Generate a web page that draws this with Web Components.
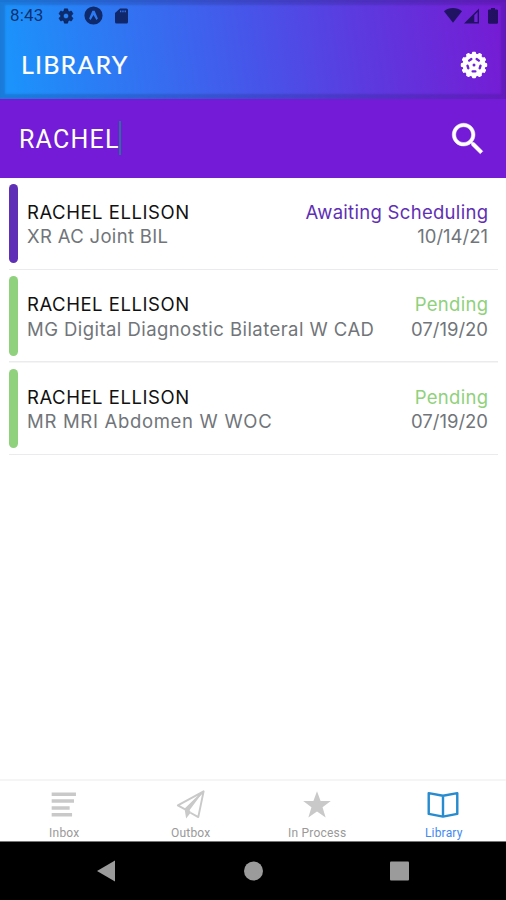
<!DOCTYPE html>
<html lang="en">
<head>
<meta charset="utf-8">
<title>Library</title>
<style>
  html, body { margin: 0; height: 100%; background: #fff; }
  body { overflow: hidden; font-family: Inter, "Liberation Sans", sans-serif; }
</style>
</head>
<body>
<library-app>
  <app-header slot="top" heading="LIBRARY" time="8:43"></app-header>
  <search-bar slot="top" value="RACHEL"></search-bar>

  <order-row state="awaiting" date="10/14/21">
    RACHEL ELLISON
    <span slot="exam" style="letter-spacing: .33px">XR AC Joint BIL</span>
    <span slot="status">Awaiting Scheduling</span>
  </order-row>
  <order-row state="pending" date="07/19/20">
    RACHEL ELLISON
    <span slot="exam" style="letter-spacing: .44px">MG Digital Diagnostic Bilateral W CAD</span>
    <span slot="status">Pending</span>
  </order-row>
  <order-row state="pending" date="07/19/20">
    RACHEL ELLISON
    <span slot="exam" style="letter-spacing: .69px">MR MRI Abdomen W WOC</span>
    <span slot="status">Pending</span>
  </order-row>

  <tab-bar slot="bottom">
    <tab-item icon="inbox">Inbox</tab-item>
    <tab-item icon="outbox">Outbox</tab-item>
    <tab-item icon="process">In Process</tab-item>
    <tab-item icon="library" active>Library</tab-item>
  </tab-bar>
  <system-nav slot="bottom"></system-nav>
</library-app>

<script>
const COG = 'M19.14 12.94c.04-.3.06-.61.06-.94 0-.32-.02-.64-.07-.94l2.03-1.58c.18-.14.23-.41.12-.61l-1.92-3.32c-.12-.22-.37-.29-.59-.22l-2.39.96c-.5-.38-1.03-.7-1.62-.94l-.36-2.54c-.04-.24-.24-.41-.48-.41h-3.84c-.24 0-.43.17-.47.41l-.36 2.54c-.59.24-1.13.57-1.62.94l-2.39-.96c-.22-.08-.47 0-.59.22L2.74 8.87c-.12.21-.08.47.12.61l2.03 1.58c-.05.3-.09.63-.09.94s.02.64.07.94l-2.03 1.58c-.18.14-.23.41-.12.61l1.92 3.32c.12.22.37.29.59.22l2.39-.96c.5.38 1.03.7 1.62.94l.36 2.54c.05.24.24.41.48.41h3.84c.24 0 .44-.17.47-.41l.36-2.54c.59-.24 1.13-.56 1.62-.94l2.39.96c.22.08.47 0 .59-.22l1.92-3.32c.12-.22.07-.47-.12-.61l-2.01-1.58zM12 15.6c-1.98 0-3.6-1.62-3.6-3.6s1.62-3.6 3.6-3.6 3.6 1.62 3.6 3.6-1.62 3.6-3.6 3.6z';

class LibraryApp extends HTMLElement {
  constructor() {
    super();
    this.attachShadow({ mode: 'open' });
    this.shadowRoot.innerHTML = `
      <style>
        :host { display: flex; flex-direction: column; height: 900px; }
        main { flex: 1; min-height: 0; padding: 0 8px 0 9px; }
      </style>
      <slot name="top"></slot>
      <main><slot></slot></main>
      <slot name="bottom"></slot>
    `;
  }
}

class AppHeader extends HTMLElement {
  constructor() {
    super();
    this.attachShadow({ mode: 'open' });

    // teeth and holes of the settings wheel
    let teeth = '';
    let holes = '';
    for (let i = 0; i < 12; i++) {
      teeth += `<rect x="-2" y="-13.2" width="4" height="4" rx="1" transform="rotate(${i * 30})"/>`;
    }
    for (let i = 0; i < 5; i++) {
      holes += `<rect x="-2.5" y="5.2" width="5" height="2.4" rx="1.1" transform="rotate(${i * 72})"/>`;
    }

    this.shadowRoot.innerHTML = `
      <style>
        :host {
          display: flex;
          flex-direction: column;
          box-sizing: border-box;
          flex: none;
          height: 98.5px;
          background: linear-gradient(82deg, #1c92fb 3%, #4557ea 48%, #5b3be0 70%, #751cd5 98%);
          box-shadow: inset 0 2px 1px rgba(20,20,80,.06), inset 0 0 2px 5px rgba(20,20,80,.18);
        }
        .status {
          display: flex;
          align-items: center;
          height: 31px;
          padding: 0 8px 0 10px;
          color: rgba(5,14,60,.74);
        }
        .time { width: 47px; font: 17px/31px Roboto, sans-serif; letter-spacing: .2px; }
        .status svg { flex: none; fill: currentColor; }
        .fill { flex: 1; }
        .title {
          display: flex;
          align-items: center;
          justify-content: space-between;
          height: 67px;
          padding: 0 18px 0 21px;
          color: #fff;
        }
        h1 { margin: 0; font: 400 25px/67px Lato, sans-serif; letter-spacing: 1.2px; -webkit-text-stroke: .2px #fff; }
      </style>
      <div class="status">
        <span class="time">${this.getAttribute('time')}</span>
        <svg width="18" height="18" viewBox="0 0 24 24"><path d="${COG}" stroke="currentColor" stroke-width=".8"/></svg>
        <svg width="19" height="19" viewBox="0 0 19 19" style="margin-left:9px">
          <path fill-rule="evenodd" d="M9.500 .4a9.100 9.100 0 1 0 0 18.200a9.100 9.100 0 0 0 0-18.200zM8.400 4.800h2.200l3.300 7.600-1.500 1.600-2.900-5-2.900 5-1.500-1.600z"/>
        </svg>
        <svg width="13" height="16" viewBox="0 0 13 16" style="margin-left:12px">
          <path fill-rule="evenodd" d="M5 .5h6.500A1.500 1.500 0 0 1 13 2v12a1.500 1.500 0 0 1-1.500 1.500h-10A1.500 1.500 0 0 1 0 14V5zM5 2.500v1.800h1.300V2.500zM7.300 2.500v1.800h1.300V2.500zM9.600 2.500v1.800h1.300V2.500z"/>
        </svg>
        <span class="fill"></span>
        <svg width="18" height="15" viewBox="0 0 18 15"><path d="M0 3.300C5-1 13-1 18 3.300L9 14.800z"/></svg>
        <svg width="16" height="16" viewBox="0 0 16 16" style="margin-left:2px">
          <path fill-rule="evenodd" d="M0 15.500L15 .5v15zM10.300 7.200v6.900h3.300V3.900z"/>
        </svg>
        <svg width="10" height="16" viewBox="0 0 10 16" style="margin:0 0 0 8px"><path d="M3 0h4v1.500h2.200l.8.800V15l-.8.800H.8L0 15V2.300l.8-.8H3z"/></svg>
      </div>
      <div class="title">
        <h1>${this.getAttribute('heading')}</h1>
        <svg width="28" height="28" viewBox="-14 -14 28 28" fill="#fff">
          <circle r="11.5"/>${teeth}
          <g fill="#7022d8">${holes}<circle r="1.500"/></g>
        </svg>
      </div>
    `;
  }
}

class SearchBar extends HTMLElement {
  constructor() {
    super();
    this.attachShadow({ mode: 'open' });
    this.shadowRoot.innerHTML = `
      <style>
        :host {
          display: flex;
          align-items: center;
          box-sizing: border-box;
          flex: none;
          height: 79.500px;
          padding: 0 17px 0 19px;
          background: #741bd7;
          color: #fff;
        }
        .value { font: 25px/79px Roboto, sans-serif; letter-spacing: 1.2px; padding-top: 2px; }
        .caret { width: 2px; height: 34px; margin-left: -1px; background: #2b6f9b; }
        svg { margin: 2px 0 0 auto; }
      </style>
      <span class="value">${this.getAttribute('value')}</span><span class="caret"></span>
      <svg width="42" height="42" viewBox="0 0 24 24" fill="#fff" stroke="#fff" stroke-width=".25">
        <path d="M15.500 14h-.79l-.28-.27C15.410 12.590 16 11.110 16 9.500 16 5.910 13.090 3 9.500 3S3 5.910 3 9.500 5.910 16 9.500 16c1.610 0 3.090-.59 4.230-1.570l.27.28v.79l5 4.990L20.490 19l-4.990-5zm-6 0C7.010 14 5 11.990 5 9.500S7.010 5 9.500 5 14 7.010 14 9.500 11.990 14 9.500 14z"/>
      </svg>
    `;
  }
}

class OrderRow extends HTMLElement {
  constructor() {
    super();
    this.attachShadow({ mode: 'open' });
    this.shadowRoot.innerHTML = `
      <style>
        :host {
          display: flex;
          box-sizing: border-box;
          height: 92.4px;
          padding-top: 5.9px;
          font-size: 18.5px;
          line-height: 24.5px;
          white-space: nowrap;
          background: linear-gradient(#ebebed, #ebebed) 0 100% / 100% 1.5px no-repeat;
          --accent: #8fd17c;
        }
        :host([state="awaiting"]) { --accent: #5f30b5; }
        .bar { flex: none; width: 9px; height: 79.500px; border-radius: 4.500px; background: var(--accent); }
        .lines { flex: 1; padding: 16px 10px 0 9px; }
        .line { display: flex; justify-content: space-between; }
        .name { color: #111; letter-spacing: .54px; }
        .exam, .date { color: #71757a; }
        .status { color: var(--accent); letter-spacing: .3px; margin-right: -.3px; }
      </style>
      <div class="bar"></div>
      <div class="lines">
        <div class="line"><span class="name"><slot></slot></span><span class="status"><slot name="status"></slot></span></div>
        <div class="line"><span class="exam"><slot name="exam"></slot></span><span class="date">${this.getAttribute('date')}</span></div>
      </div>
    `;
  }
}

class TabBar extends HTMLElement {
  constructor() {
    super();
    this.attachShadow({ mode: 'open' });
    this.shadowRoot.innerHTML = `
      <style>
        :host {
          display: flex;
          box-sizing: border-box;
          flex: none;
          height: 62px;
          border-top: 2px solid #f5f5f5;
          background: #fff;
        }
      </style>
      <slot></slot>
    `;
  }
}

const TAB_ICONS = {
  inbox: '<path d="M4.300 6.500h25M4.300 13.500h23M4.300 20.500h18.500M4.300 27.500h21" stroke="currentColor" stroke-width="3.600"/>',
  outbox: '<path d="M31 3.500L4.500 18l7.500 4L31 3.500L25.500 30l-8-4.500" fill="none" stroke="currentColor" stroke-width="2" stroke-linejoin="round"/><path d="M31 3.500L11.500 22l1.500 9.500 5-6.500-1.500-2z" fill="currentColor"/>',
  process: '<path d="M17 3.500l3.700 9.800h10.500l-8.500 6.500 3.200 10.700L17 24.300l-8.900 6.200 3.200-10.700-8.500-6.500h10.500z" fill="currentColor"/>',
  library: '<path d="M2.300 5.300L17 8l14.700-2.700v21.400L17 29.500 2.300 26.700zM17 8v21.500" fill="none" stroke="#278bcf" stroke-width="2.500" stroke-linejoin="round"/>'
};

class TabItem extends HTMLElement {
  constructor() {
    super();
    this.attachShadow({ mode: 'open' });
    this.shadowRoot.innerHTML = `
      <style>
        :host {
          display: flex;
          flex: 1;
          flex-direction: column;
          align-items: center;
          padding-top: 6px;
          color: #c9c9c9;
        }
        .icon { width: 34px; height: 34px; margin-left: 1.4px; }
        .icon svg { display: block; }
        .label { color: #999; font: 12px/14px Roboto, sans-serif; letter-spacing: .2px; margin: 5px 0 0 2px; }
        :host([active]) .label { color: #4288f2; }
      </style>
      <div class="icon"><svg width="34" height="34" viewBox="-.5 -1 35 35">${TAB_ICONS[this.getAttribute('icon')]}</svg></div>
      <span class="label"><slot></slot></span>
    `;
  }
}

class SystemNav extends HTMLElement {
  constructor() {
    super();
    this.attachShadow({ mode: 'open' });
    this.shadowRoot.innerHTML = `
      <style>
        :host {
          display: flex;
          box-sizing: border-box;
          flex: none;
          justify-content: space-between;
          align-items: center;
          height: 59px;
          padding: 0 97px 0 96px;
          border-top: 1px solid #777;
          background: #000;
        }
        svg { display: block; fill: #9b9b9b; }
      </style>
      <svg width="20" height="22"><path d="M1 11L19 .5v21z"/></svg>
      <svg width="20" height="20"><circle cx="10.500" cy="10" r="9.500"/></svg>
      <svg width="19" height="20"><rect width="19" height="19" y=".5" rx="1"/></svg>
    `;
  }
}

customElements.define('library-app', LibraryApp);
customElements.define('app-header', AppHeader);
customElements.define('search-bar', SearchBar);
customElements.define('order-row', OrderRow);
customElements.define('tab-bar', TabBar);
customElements.define('tab-item', TabItem);
customElements.define('system-nav', SystemNav);
</script>
</body>
</html>
